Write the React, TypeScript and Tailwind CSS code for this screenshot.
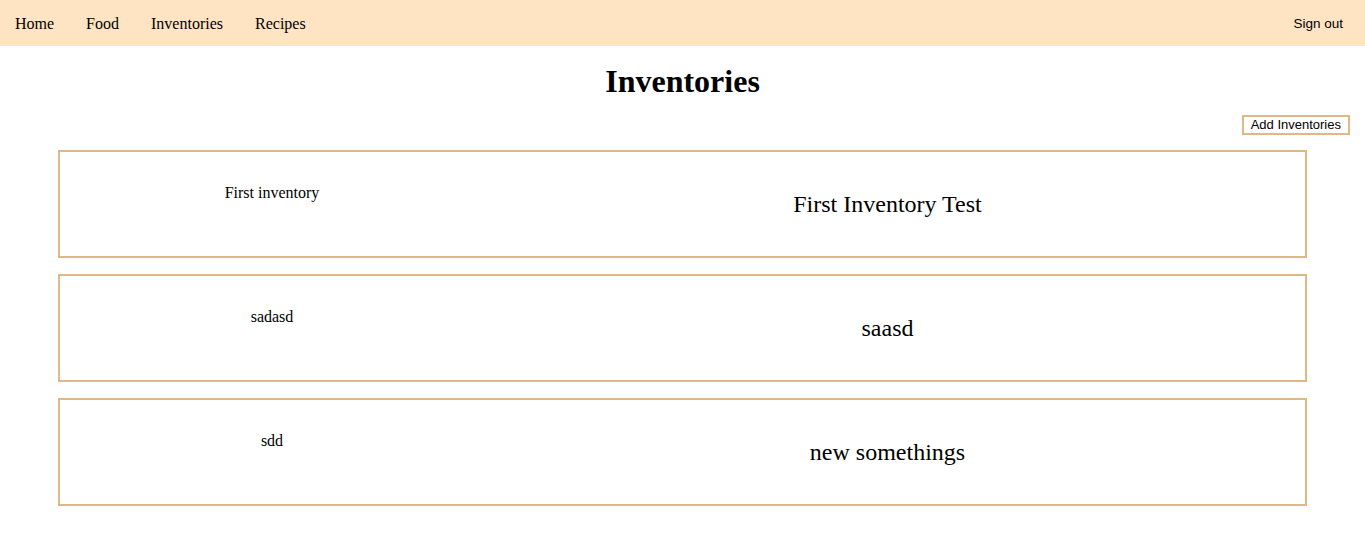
import React from 'react'

const inventories = [
  { name: 'First inventory', description: 'First Inventory Test' },
  { name: 'sadasd', description: 'saasd' },
  { name: 'sdd', description: 'new somethings' },
]

export default function App() {
  return (
    <div className="min-h-screen bg-white text-black font-['Liberation_Serif',serif]">
      {/* Nav bar */}
      <nav className="h-[46px] bg-[#ffe4c4] flex items-center justify-between pl-[15px] pr-[22px] pt-[1px]">
        <div className="flex items-center gap-[32px] text-[16px]">
          <span>Home</span>
          <span>Food</span>
          <span>Inventories</span>
          <span>Recipes</span>
        </div>
        <span className="text-[13.5px] pt-[1px] font-['Liberation_Sans',sans-serif]">Sign out</span>
      </nav>

      <h1 className="text-center text-[32px] font-bold leading-[37px] mt-[17px]">Inventories</h1>

      <div className="flex justify-end pr-[15px] mt-[15px]">
        <button className="border-2 border-[#deb887] px-[7px] h-[20px] leading-[16px] text-[13px] font-['Liberation_Sans',sans-serif]">
          Add Inventories
        </button>
      </div>

      <div className="mx-[58px] mt-[15px] flex flex-col gap-[16px]">
        {inventories.map((inv, i) => (
          <div key={i} className="h-[108px] border-2 border-[#deb887] flex">
            <div className="w-[424px] text-center text-[16px] pt-[29px]">{inv.name}</div>
            <div className="flex-1 pr-[14px] flex items-center justify-center text-[24px]">
              {inv.description}
            </div>
          </div>
        ))}
      </div>
    </div>
  )
}
